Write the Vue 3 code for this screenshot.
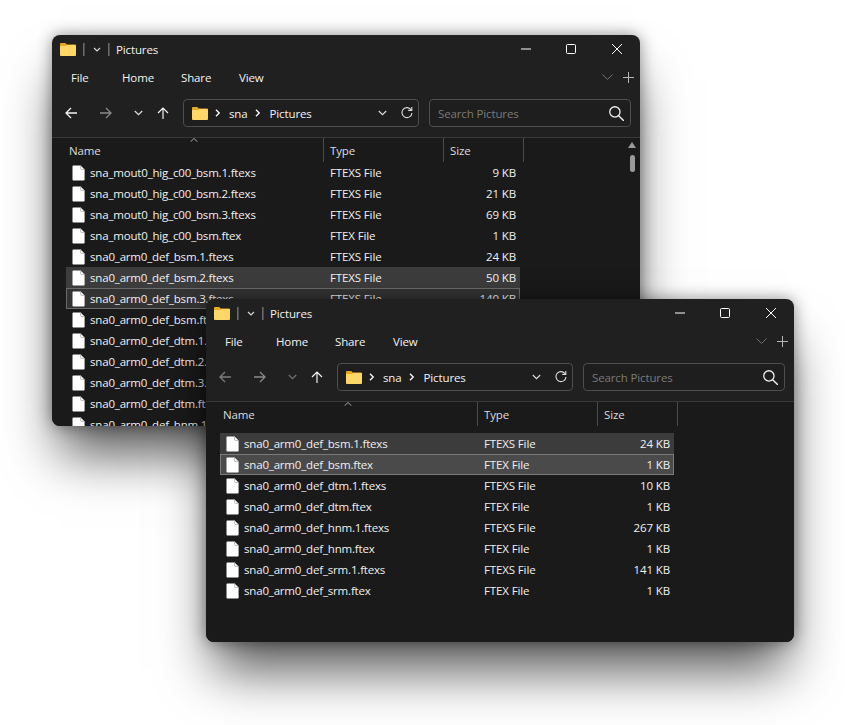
<script setup>
const file = (name, type, size) => ({ name, type, size })
const t1 = 'FTEXS File'
const t2 = 'FTEX File'
const windows = [
  {
    id: 'win-a', back: true, scroll: true,
    rows: [
      file('sna_mout0_hig_c00_bsm.1.ftexs', t1, '9 KB'),
      file('sna_mout0_hig_c00_bsm.2.ftexs', t1, '21 KB'),
      file('sna_mout0_hig_c00_bsm.3.ftexs', t1, '69 KB'),
      file('sna_mout0_hig_c00_bsm.ftex', t2, '1 KB'),
      file('sna0_arm0_def_bsm.1.ftexs', t1, '24 KB'),
      { ...file('sna0_arm0_def_bsm.2.ftexs', t1, '50 KB'), sel: 'sel' },
      { ...file('sna0_arm0_def_bsm.3.ftexs', t1, '140 KB'), sel: 'cur' },
      file('sna0_arm0_def_bsm.ftex', t2, '1 KB'),
      file('sna0_arm0_def_dtm.1.ftexs', t1, '10 KB'),
      file('sna0_arm0_def_dtm.2.ftexs', t1, '12 KB'),
      file('sna0_arm0_def_dtm.3.ftexs', t1, '34 KB'),
      file('sna0_arm0_def_dtm.ftex', t2, '1 KB'),
      file('sna0_arm0_def_hnm.1.ftexs', t1, '267 KB')
    ]
  },
  {
    id: 'win-b', back: false, scroll: false,
    rows: [
      { ...file('sna0_arm0_def_bsm.1.ftexs', t1, '24 KB'), sel: 'sel' },
      { ...file('sna0_arm0_def_bsm.ftex', t2, '1 KB'), sel: 'cur' },
      file('sna0_arm0_def_dtm.1.ftexs', t1, '10 KB'),
      file('sna0_arm0_def_dtm.ftex', t2, '1 KB'),
      file('sna0_arm0_def_hnm.1.ftexs', t1, '267 KB'),
      file('sna0_arm0_def_hnm.ftex', t2, '1 KB'),
      file('sna0_arm0_def_srm.1.ftexs', t1, '141 KB'),
      file('sna0_arm0_def_srm.ftex', t2, '1 KB')
    ]
  }
]
const menus = ['File', 'Home', 'Share', 'View']
</script>

<template>
  <div class="desktop">
    <section v-for="w in windows" :key="w.id" class="window" :class="w.id">
      <header class="titlebar">
        <svg class="folder" viewBox="0 0 16 13"><path d="M0 1.200C0 .5.5 0 1.200 0h4l1.600 1.600h8C15.500 1.600 16 2.100 16 2.800v9C16 12.500 15.500 13 14.800 13H1.200C.5 13 0 12.500 0 11.800z" fill="#e8a91f"/><path d="M0 4.200c0-.7.5-1.200 1.200-1.200H6l1.400-1h7.400c.7 0 1.200.5 1.200 1.200v8.600c0 .7-.5 1.200-1.200 1.200H1.200C.5 13 0 12.500 0 11.800z" fill="#ffd767"/></svg>
        <i class="qsep"></i>
        <svg class="qchev" viewBox="0 0 8 5"><path d="M1 1l3 3 3-3" fill="none" stroke="#d8d8d8" stroke-width="1.200"/></svg>
        <i class="qsep second"></i>
        <span class="title">Pictures</span>
        <svg class="cap min" viewBox="0 0 10 10"><path d="M0 5h10" stroke="#fff" stroke-width="1"/></svg>
        <svg class="cap max" viewBox="0 0 10 10"><rect x=".5" y=".5" width="9" height="9" rx="1" fill="none" stroke="#fff"/></svg>
        <svg class="cap close" viewBox="0 0 10 10"><path d="M0 0l10 10M10 0L0 10" stroke="#fff" stroke-width="1"/></svg>
      </header>

      <nav class="menubar">
        <span v-for="m in menus" :key="m">{{ m }}</span>
        <svg class="ribbon-chev" viewBox="0 0 11 6"><path d="M.5.5l5 5 5-5" fill="none" stroke="#6e6e6e"/></svg>
        <svg class="ribbon-plus" viewBox="0 0 11 11"><path d="M5.500 0v11M0 5.500h11" stroke="#b5b5b5"/></svg>
      </nav>

      <div class="toolbar">
        <svg class="nav-arrow" viewBox="0 0 12 12"><path d="M12 6H1M6 1L1 6l5 5" fill="none" :stroke="w.back ? '#f2f2f2' : '#7c7c7c'" stroke-width="1.300"/></svg>
        <svg class="nav-arrow fwd" viewBox="0 0 12 12"><path d="M0 6h11M6 1l5 5-5 5" fill="none" stroke="#8a8a8a" stroke-width="1.300"/></svg>
        <svg class="nav-chev" viewBox="0 0 9 6"><path d="M.8 1l3.700 3.700L8.200 1" fill="none" :stroke="w.back ? '#d8d8d8' : '#6f6f6f'" stroke-width="1.300"/></svg>
        <svg class="nav-arrow up" viewBox="0 0 12 12"><path d="M6 12V1M1 6l5-5 5 5" fill="none" stroke="#f2f2f2" stroke-width="1.200"/></svg>

        <div class="address">
          <svg class="folder" viewBox="0 0 16 13"><path d="M0 1.200C0 .5.5 0 1.200 0h4l1.600 1.600h8c.7 0 1.200.5 1.200 1.200v9c0 .7-.5 1.200-1.200 1.200H1.200C.5 13 0 12.500 0 11.800z" fill="#e8a91f"/><path d="M0 4.200c0-.7.5-1.200 1.200-1.200H6l1.400-1h7.400c.7 0 1.200.5 1.200 1.200v8.600c0 .7-.5 1.200-1.200 1.200H1.200C.5 13 0 12.500 0 11.800z" fill="#ffd767"/></svg>
          <svg class="crumb" viewBox="0 0 5 8"><path d="M1 .8L4.200 4 1 7.200" fill="none" stroke="#f2f2f2" stroke-width="1.400"/></svg>
          <span class="sna">sna</span>
          <svg class="crumb" viewBox="0 0 5 8"><path d="M1 .8L4.200 4 1 7.200" fill="none" stroke="#f2f2f2" stroke-width="1.400"/></svg>
          <span class="pics">Pictures</span>
          <svg class="addr-chev" viewBox="0 0 9 6"><path d="M.8 1l3.700 3.700L8.200 1" fill="none" stroke="#e0e0e0" stroke-width="1.100"/></svg>
          <svg class="refresh" viewBox="0 0 12 12"><path d="M10.400 3.200A5 5 0 1 0 11 6" fill="none" stroke="#dcdcdc" stroke-width="1.100"/><path d="M7.200 3.400h3.600V0" fill="none" stroke="#dcdcdc" stroke-width="1.100"/></svg>
        </div>

        <div class="search">
          <span>Search Pictures</span>
          <svg viewBox="0 0 14 14"><circle cx="5.500" cy="5.500" r="4.800" fill="none" stroke="#f0f0f0" stroke-width="1.200"/><path d="M9 9l5 5" stroke="#f0f0f0" stroke-width="1.300"/></svg>
        </div>
      </div>

      <div class="pane">
        <svg class="sort" viewBox="0 0 8 4"><path d="M.5 3.800L4 .5l3.500 3.300" fill="none" stroke="#a8a8a8"/></svg>
        <div class="columns">
          <span class="col-name">Name</span>
          <span class="col-type">Type</span>
          <span class="col-size">Size</span>
        </div>
        <div class="rows">
          <div v-for="r in w.rows" :key="r.name" class="row" :class="r.sel">
            <svg class="doc" viewBox="0 0 13 16"><path d="M.5 1.200C.5.7.8.4 1.300.4H8.600L12.600 4.400V14.800c0 .5-.3.8-.8.8H1.300c-.5 0-.8-.3-.8-.8z" fill="#fff"/><path d="M8.600.4V3.600c0 .5.300.8.800.8h3.200" fill="none" stroke="#a9a9a9" stroke-width=".8"/></svg>
            <span class="name">{{ r.name }}</span>
            <span class="type">{{ r.type }}</span>
            <span class="size">{{ r.size }}</span>
          </div>
        </div>
        <div v-if="w.scroll" class="scrollbar">
          <svg viewBox="0 0 8 6"><path d="M4 0l4 6H0z" fill="#9a9a9a"/></svg>
          <i></i>
        </div>
      </div>
    </section>
  </div>
</template>

<style>
html, body { margin: 0; background: #fff; }
</style>

<style scoped>
.desktop {
  position: relative;
  width: 845px;
  height: 725px;
  overflow: hidden;
  background: #fff;
  font-family: "Open Sans", "Noto Sans", sans-serif;
  font-size: 11.500px;
  letter-spacing: -.13px;
  color: #f2f2f2;
}
.window {
  position: absolute;
  width: 588px;
  display: flex;
  flex-direction: column;
  overflow: hidden;
  border-radius: 8px;
  background: #202020;
  box-shadow: 0 0 16px rgba(0,0,0,.42), 0 36px 50px -8px rgba(0,0,0,.66);
}
.win-a { left: 52px; top: 35px; height: 391px; }
.win-b { left: 206px; top: 299px; height: 343px; }
.titlebar {
  height: 28px;
  flex: none;
  display: flex;
  align-items: center;
  padding-left: 8px;
}
.folder { width: 16px; height: 13px; flex: none; }
.qsep {
  width: 2px;
  height: 13px;
  margin-left: 7px;
  border-left: 1px solid #6b6b6b;
  border-right: 1px solid #4a4a4a;
  box-sizing: border-box;
}
.qchev { width: 8px; height: 5px; margin-left: 8px; }
.title { margin-left: 6px; }
.cap { width: 10px; height: 10px; flex: none; }
.min { margin-left: auto; }
.max { margin-left: 35px; }
.close { margin-left: 36px; margin-right: 18px; }
.menubar {
  height: 28px;
  flex: none;
  display: grid;
  grid-template-columns: 51px 59px 58px 1fr auto auto;
  align-items: center;
  padding-left: 19px;
}
.ribbon-chev { width: 11px; height: 6px; grid-column: 5; }
.ribbon-plus { width: 11px; height: 11px; margin: 0 6px 0 10px; grid-column: 6; }
.toolbar {
  height: 47px;
  flex: none;
  box-sizing: border-box;
  display: flex;
  align-items: center;
  padding: 0 9px 2px 13px;
  border-bottom: 1px solid #383838;
}
.nav-arrow { width: 12px; height: 12px; flex: none; }
.fwd { margin-left: 23px; }
.nav-chev { width: 9px; height: 6px; margin-left: 22px; flex: none; }
.up { margin-left: 14px; }
.address, .search {
  height: 28px;
  box-sizing: border-box;
  border: 1px solid #4d4d4d;
  border-radius: 4px;
  display: flex;
  align-items: center;
  background: #1e1e1e;
}
.address { width: 236px; margin-left: 14px; padding-left: 8px; }
.crumb { width: 5px; height: 8px; margin-left: 7px; flex: none; }
.sna { margin-left: 9px; }
.pics { margin-left: 10px; }
.addr-chev { width: 9px; height: 6px; margin-left: auto; flex: none; }
.refresh { width: 12px; height: 12px; margin: 0 5px 0 14px; flex: none; }
.search {
  width: 202px;
  margin-left: 10px;
  padding: 0 6px 0 8px;
  justify-content: space-between;
  color: #7a7a7a;
}
.search svg { width: 15px; height: 15px; }
.pane {
  position: relative;
  flex: 1;
  min-height: 0;
  background: #1a1a1a;
  overflow: hidden;
}
.sort { position: absolute; left: 138px; top: 0; width: 8px; height: 4px; }
.columns {
  height: 24px;
  display: grid;
  grid-template-columns: 271px 120px 80px;
}
.columns span {
  display: flex;
  align-items: center;
  padding-left: 6px;
  padding-top: 1px;
  color: #dcdcdc;
  box-sizing: border-box;
}
.columns .col-name { padding-left: 17px; }
.columns .col-type, .columns .col-size { border-left: 1px solid #4a4a4a; }
.columns .col-size { border-right: 1px solid #4a4a4a; width: 81px; }
.rows { padding-left: 14px; }
.win-b .rows { padding-top: 7px; }
.row {
  width: 454px;
  height: 21px;
  box-sizing: border-box;
  display: grid;
  grid-template-columns: 18px 240px 120px 1fr;
  align-items: center;
  padding: 0 4px 0 6px;
}
.doc { width: 13px; height: 16px; }
.size { text-align: right; }
.name { letter-spacing: -.18px; }
.name, .type, .size { color: #f0f0f0; white-space: nowrap; }
.sel { background: #3c3c3c; }
.cur { background: #333; outline: 1px solid #6a6a6a; outline-offset: -1px; }
.win-b .cur { background: #4a4a4a; outline-color: #7a7a7a; }
.scrollbar {
  position: absolute;
  right: 4px;
  top: 4px;
  width: 8px;
  display: flex;
  flex-direction: column;
  align-items: center;
  gap: 7px;
}
.scrollbar svg { width: 8px; height: 6px; }
.scrollbar i {
  width: 5px;
  height: 17px;
  border-radius: 3px;
  background: #9a9a9a;
}
</style>
